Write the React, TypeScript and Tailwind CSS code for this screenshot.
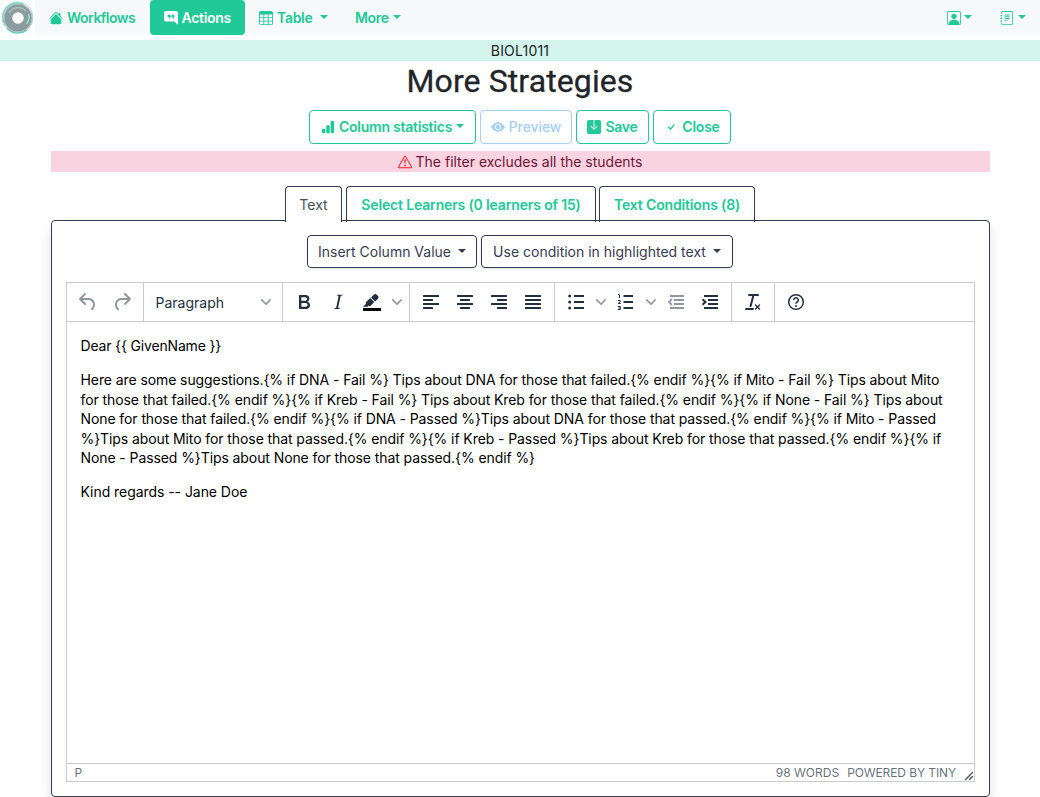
import type { ReactNode } from "react";
import {
  BsBarChartFill,
  BsChatRightQuoteFill,
  BsCheck,
  BsExclamationTriangle,
  BsEyeFill,
  BsHouseFill,
  BsJournalText,
  BsPersonSquare,
  BsSaveFill,
  BsTable,
} from "react-icons/bs";

const Caret = ({ className = "" }: { className?: string }) => (
  <span
    className={`mb-px inline-block h-0 w-0 border-x-4 border-t-4 border-x-transparent border-t-current ${className}`}
  />
);

const Logo = () => (
  <svg viewBox="0 0 35 35" className="h-[35px] w-[35px] shrink-0 bg-white">
    <circle cx="17.5" cy="17.5" r="15.6" fill="none" stroke="#a9e4da" strokeWidth="1" />
    <circle cx="18" cy="18" r="9.6" fill="none" stroke="#8a9c9d" strokeWidth="8.5" />
    <circle cx="18" cy="18" r="14" fill="none" stroke="#b5b5b9" strokeWidth="1.2" />
    <path d="M5 25A14.500 14.500 0 0 1 24 4.500" fill="none" stroke="#6fcfc1" strokeWidth="1.2" />
    <path d="M9 13A10.500 10.500 0 0 1 26 11" fill="none" stroke="#b4c5c5" strokeWidth="1.200" />
    <path d="M28.500 14A11 11 0 0 1 26.500 24" fill="none" stroke="#84ebdb" strokeWidth="1.400" />
    <path d="M7 28A14.500 14.500 0 0 0 27 30" fill="none" stroke="#62c9ba" strokeWidth="1.200" />
    <circle cx="18" cy="18" r="5.700" fill="#fff" />
  </svg>
);

const Icon = ({ children, muted = false }: { children: ReactNode; muted?: boolean }) => (
  <svg
    viewBox="0 0 24 24"
    fill="currentColor"
    className={`h-6 w-6 shrink-0 ${muted ? "text-[#222f3e]/50" : "text-[#222f3e]"}`}
  >
    {children}
  </svg>
);

const Cell = ({ children }: { children: ReactNode }) => (
  <div className="flex h-[34px] w-[34px] shrink-0 items-center justify-center">{children}</div>
);

const Chevron = () => (
  <div className="flex h-[34px] w-4 shrink-0 items-center justify-center">
    <svg viewBox="0 0 10 10" className="h-2.5 w-2.5 fill-[#222f3e]/50">
      <path d="M8.7 2.2c.3-.3.8-.3 1 0 .4.4.4.9 0 1.2L5.7 7.8c-.3.3-.9.3-1.2 0L.2 3.4a.8.8 0 0 1 0-1.2c.3-.3.8-.3 1.1 0L5 6l3.7-3.8Z" />
    </svg>
  </div>
);

const Lines = ({ rows }: { rows: [number, number][] }) => (
  <Icon>
    {rows.map(([x, w], i) => (
      <rect key={i} x={x} y={5 + i * 4} width={w} height="2" rx="0.6" />
    ))}
  </Icon>
);

const bodyLines = [
  "Here are some suggestions.{% if DNA - Fail %} Tips about DNA for those that failed.{% endif %}{% if Mito - Fail %} Tips about Mito",
  "for those that failed.{% endif %}{% if Kreb - Fail %} Tips about Kreb for those that failed.{% endif %}{% if None - Fail %} Tips about",
  "None for those that failed.{% endif %}{% if DNA - Passed %}Tips about DNA for those that passed.{% endif %}{% if Mito - Passed",
  "%}Tips about Mito for those that passed.{% endif %}{% if Kreb - Passed %}Tips about Kreb for those that passed.{% endif %}{% if",
  "None - Passed %}Tips about None for those that passed.{% endif %}",
];

function Navbar() {
  return (
    <nav className="flex h-[35px] items-center bg-[#f8f9fb] font-semibold tracking-[-0.3px] text-[#20c997]">
      <Logo />
      <a className="ml-3.5 flex w-[101px] items-center gap-1">
        <BsHouseFill className="h-3.5 w-3.5" />
        <span className="tracking-[-0.5px]">Workflows</span>
      </a>
      <a className="flex h-[35px] w-[95px] items-center gap-1 rounded bg-[#20c997] pl-[13.5px] text-white">
        <BsChatRightQuoteFill className="h-3.5 w-3.5" />
        Actions
      </a>
      <a className="ml-3.5 flex w-24 items-center gap-1">
        <BsTable className="h-3.5 w-3.5" />
        Table
        <Caret className="ml-1" />
      </a>
      <a className="flex items-center gap-1">
        More
        <Caret />
      </a>
      <div className="mr-3.5 ml-auto flex items-center gap-[28px]">
        <a className="flex items-center gap-[3px]">
          <BsPersonSquare className="h-3.5 w-3.5" />
          <Caret />
        </a>
        <a className="flex items-center gap-[4px]">
          <BsJournalText className="h-3.5 w-3.5" />
          <Caret />
        </a>
      </div>
    </nav>
  );
}

function Toolbar() {
  return (
    <div className="flex h-[39px] shrink-0 items-center border-b border-[#ccc]">
      <div className="flex h-full w-[77px] items-center border-r border-[#ccc] pl-1">
        <Cell>
          <Icon muted>
            <path d="M6.4 8H12c3.700 0 6.200 2 6.800 5.100.6 2.700-.4 5.600-2.300 6.800a1 1 0 0 1-1-1.800c1.100-.6 1.800-2.700 1.400-4.600-.5-2.100-2.100-3.500-4.900-3.500H6.400l3.300 3.300a1 1 0 1 1-1.400 1.400l-5-5a1 1 0 0 1 0-1.400l5-5a1 1 0 0 1 1.400 1.400L6.400 8Z" />
          </Icon>
        </Cell>
        <Cell>
          <Icon muted>
            <path d="M17.600 10H12c-2.800 0-4.400 1.400-4.900 3.500-.4 2 .3 4 1.400 4.600a1 1 0 1 1-1 1.800c-2-1.200-2.900-4.100-2.300-6.800.6-3 3-5.100 6.800-5.100h5.600l-3.300-3.300a1 1 0 1 1 1.400-1.400l5 5a1 1 0 0 1 0 1.400l-5 5a1 1 0 0 1-1.400-1.400l3.300-3.300Z" />
          </Icon>
        </Cell>
      </div>
      <div className="flex h-full w-[139px] items-center justify-between border-r border-[#ccc] pr-2 pl-[11.5px] text-[#222f3e]">
        <span>Paragraph</span>
        <Chevron />
      </div>
      <div className="flex h-full w-[127px] items-center border-r border-[#ccc] pl-1">
        <Cell>
          <Icon>
            <path d="M7.800 19c-.3 0-.5 0-.6-.2l-.2-.5V5.700c0-.2 0-.4.2-.5l.6-.2h5c1.500 0 2.700.3 3.500 1 .7.6 1.100 1.400 1.100 2.500a3 3 0 0 1-.6 1.900c-.4.6-1 1-1.600 1.200.4.1.9.3 1.300.6s.8.7 1 1.200c.4.4.5 1 .5 1.600 0 1.300-.4 2.300-1.300 3-.8.7-2.100 1-3.800 1H7.800Zm5-8.300c.6 0 1.200-.1 1.600-.5.4-.3.6-.7.6-1.300 0-1.100-.8-1.700-2.300-1.700H9.300v3.500h3.400Zm.5 6c.7 0 1.300-.1 1.700-.4.4-.4.6-.9.6-1.500s-.2-1-.7-1.400c-.4-.3-1-.4-2-.4H9.400v3.800h4Z" />
          </Icon>
        </Cell>
        <Cell>
          <Icon>
            <path d="m16.700 4.700-.1.9h-.3c-.6 0-1 0-1.400.3-.3.3-.4.6-.5 1.100l-2.100 9.800v.6c0 .5.4.8 1.400.8h.2l-.2.8H8l.2-.8h.2c1.100 0 1.800-.5 2-1.500l2-9.800.1-.5c0-.6-.4-.8-1.400-.8h-.3l.2-.9h5.800Z" />
          </Icon>
        </Cell>
        <Cell>
          <Icon>
            <path fill="#000" d="M3 18h18v3H3z" />
            <path d="M7.700 16.700H3l3.300-3.300-.7-.8L10.200 8l4 4.100-4 4.200c-.2.2-.6.2-.8 0l-.6-.7-1.100 1.100Z" />
            <path d="M11 7.400l3-2.900a2 2 0 0 1 2.600 0L18 6c.7.7.7 2 0 2.700l-2.900 2.900Z" />
          </Icon>
        </Cell>
        <Chevron />
      </div>
      <div className="flex h-full w-[145px] items-center border-r border-[#ccc] pl-1">
        <Cell><Lines rows={[[4, 16], [4, 10], [4, 16], [4, 10]]} /></Cell>
        <Cell><Lines rows={[[4, 16], [7, 10], [4, 16], [7, 10]]} /></Cell>
        <Cell><Lines rows={[[4, 16], [10, 10], [4, 16], [10, 10]]} /></Cell>
        <Cell><Lines rows={[[4, 16], [4, 16], [4, 16], [4, 16]]} /></Cell>
      </div>
      <div className="flex h-full w-[177px] items-center border-r border-[#ccc] pl-1">
        <Cell>
          <Icon>
            <path d="M10 5h10v2H10zM10 11h10v2H10zM10 17h10v2H10z" />
            <circle cx="5.700" cy="6" r="1.500" />
            <circle cx="5.700" cy="12" r="1.500" />
            <circle cx="5.700" cy="18" r="1.500" />
          </Icon>
        </Cell>
        <Chevron />
        <Cell>
          <Icon>
            <path d="M9.500 5H19v2H9.500zM9.500 11H19v2H9.500zM9.500 17H19v2H9.500z" />
            <path
              d="M4 4.700h1.500V8M3.800 10.600h2.500v1.200L4.100 13.500h2.600M3.800 16.500h2.500v3H3.800M4.500 18h1.800"
              fill="none"
              stroke="currentColor"
            />
          </Icon>
        </Cell>
        <Chevron />
        <Cell>
          <Icon muted>
            <path d="M6 5h14v2H6zM10 9h10v2H10zM10 13h10v2H10zM6 17h14v2H6z" />
            <path d="M8 9l-3 3 3 3" fill="none" stroke="currentColor" strokeWidth="1.800" />
          </Icon>
        </Cell>
        <Cell>
          <Icon>
            <path d="M6 5h14v2H6zM10 9h10v2H10zM10 13h10v2H10zM6 17h14v2H6z" />
            <path d="M4.500 9.200l3 2.800-3 2.800" fill="none" stroke="currentColor" strokeWidth="2" />
          </Icon>
        </Cell>
      </div>
      <div className="flex h-full w-[43px] items-center border-r border-[#ccc] pl-1">
        <Cell>
          <Icon>
            <path d="M13.200 6a1 1 0 0 1 0 .2l-2.600 10a1 1 0 0 1-1 .8h-.2a.8.8 0 0 1-.8-1l2.600-10H8a1 1 0 1 1 0-2h9a1 1 0 0 1 0 2h-3.800ZM5 18h7a1 1 0 0 1 0 2H5a1 1 0 0 1 0-2Zm13 1.500L16.500 18 15 19.500a.7.7 0 0 1-1-1l1.500-1.500-1.500-1.500a.7.7 0 0 1 1-1l1.500 1.500 1.500-1.500a.7.7 0 0 1 1 1L17.500 17l1.500 1.500a.7.7 0 0 1-1 1Z" />
          </Icon>
        </Cell>
      </div>
      <div className="flex h-full items-center pl-1">
        <Cell>
          <Icon>
            <circle cx="12" cy="12" r="7.300" fill="none" stroke="currentColor" strokeWidth="1.500" />
            <path
              d="M9.700 10a2.300 2.300 0 1 1 3.500 2c-.8.5-1.200.8-1.200 1.700"
              fill="none"
              stroke="currentColor"
              strokeWidth="1.500"
            />
            <circle cx="12" cy="16" r="1" />
          </Icon>
        </Cell>
      </div>
    </div>
  );
}

function Editor() {
  return (
    <div className="mx-3.5 mt-3.5 flex h-[500px] flex-col border border-[#ccc]">
      <Toolbar />
      <div className="flex-1 pt-[14.400px] pl-[13.5px] text-sm leading-[19.6px] tracking-[-0.09px] whitespace-nowrap text-black">
        <p className="tracking-[-0.17px]">{"Dear {{ GivenName }}"}</p>
        <p className="mt-3.5">
          {bodyLines.map((line) => (
            <span key={line} className="block">
              {line}
            </span>
          ))}
        </p>
        <p className="mt-3.5 tracking-[-0.05px]">Kind regards -- Jane Doe</p>
      </div>
      <div className="flex h-[18px] shrink-0 items-center border-t border-[#ccc] pl-[7.5px] text-xs text-[#222f3e]/70">
        <span>P</span>
        <span className="ml-auto">98 WORDS</span>
        <span className="ml-2 tracking-[-0.1px]">POWERED BY TINY</span>
        <svg viewBox="0 0 10 10" className="ml-[8px] h-2.5 w-2.5 self-end fill-[#222f3e]/80">
          <path d="M8.100 1.100A.5.5 0 1 1 9 2l-7 7A.5.5 0 1 1 1 8l7-7ZM8.100 5.100A.5.5 0 1 1 9 6l-3 3A.5.5 0 1 1 5 8l3-3Z" />
        </svg>
      </div>
    </div>
  );
}

export default function App() {
  return (
    <div className="h-[797px] w-[1040px] overflow-hidden bg-white font-[Inter,sans-serif] text-sm leading-[21px] text-[#212529]">
      <Navbar />
      <div className="mt-[5px] h-[21px] bg-[#d2f4ea] text-center tracking-[0.2px]">BIOL1011</div>
      <h1 className="h-[49px] text-center font-[Roboto,sans-serif] text-[32px] leading-[41px] tracking-[0.1px] [-webkit-text-stroke:0.3px_#212529]">
        More Strategies
      </h1>
      <div className="flex h-[34px] justify-center gap-1 font-semibold tracking-[-0.24px] text-[#20c997]">
        <button className="flex w-[167px] items-center justify-center gap-1 rounded border border-current pb-px">
          <BsBarChartFill className="h-3.5 w-3.5" />
          Column statistics
          <Caret />
        </button>
        <button className="flex w-[92px] items-center justify-center gap-1 rounded border border-[#a6d0fb] pb-px font-medium tracking-[-0.1px] text-[#a6d0fb]">
          <BsEyeFill className="h-3.5 w-3.5" />
          Preview
        </button>
        <button className="flex w-[73px] items-center justify-center gap-1 rounded border border-current pb-px">
          <BsSaveFill className="h-3.5 w-3.5" />
          Save
        </button>
        <button className="flex w-[78px] items-center justify-center gap-1 rounded border border-current pb-px">
          <BsCheck className="h-3.5 w-3.5" />
          Close
        </button>
      </div>
      <div className="mr-[50px] ml-[51px] mt-[7px] flex h-[21px] items-center justify-center gap-1 bg-[#f9d3e0] pr-px text-[#6f1437]">
        <BsExclamationTriangle className="h-3.5 w-3.5 text-[#ff1a1a]" />
        The filter excludes all the students
      </div>
      <div className="relative z-10 mt-3.5 flex h-9 justify-center text-[#20c997]">
        <div className="mr-1 flex w-[57px] justify-center rounded-t border border-b-0 border-[#373a54] bg-white pt-[7px] text-[#495057]">
          Text
        </div>
        <div className="mr-[3px] w-[250px] rounded-t border border-b-0 border-[#373a54] pt-[7px] text-center font-semibold tracking-[-0.15px]">
          Select Learners (0 learners of 15)
        </div>
        <div className="w-[156px] rounded-t border border-b-0 border-[#373a54] pt-[7px] text-center font-semibold tracking-[-0.15px]">
          Text Conditions (8)
        </div>
      </div>
      <div className="mr-[50px] ml-[51px] -mt-0.5 h-[577px] rounded border border-[#373a54] pt-3.5 shadow-[0_7px_14px_rgba(0,0,0,0.12)]">
        <div className="mr-px flex h-[33px] justify-center gap-1 text-[#373a54]">
          <button className="flex w-[170px] items-center justify-center gap-[7px] rounded border border-current shadow-sm">
            Insert Column Value
            <Caret />
          </button>
          <button className="flex w-[252px] items-center justify-center gap-[7px] rounded border border-current shadow-sm">
            Use condition in highlighted text
            <Caret />
          </button>
        </div>
        <Editor />
      </div>
    </div>
  );
}
